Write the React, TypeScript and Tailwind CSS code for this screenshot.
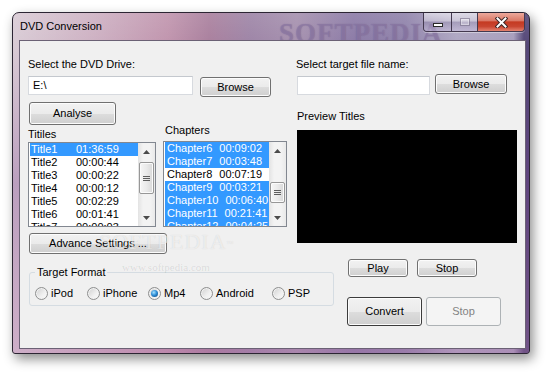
import React from "react";

const FONT = "font-['Liberation_Sans',Arial,sans-serif]";

function Btn({
  className = "",
  children,
  disabled = false,
  isDefault = false,
}: {
  className?: string;
  children: React.ReactNode;
  disabled?: boolean;
  isDefault?: boolean;
}) {
  const skin = disabled
    ? "border-[#adb2b5] bg-[#f4f4f4] text-[#838383]"
    : `${isDefault ? "border-[#3c3c3c]" : "border-[#707070]"} bg-[linear-gradient(180deg,#f2f2f2_0%,#ebebeb_50%,#dddddd_51%,#cfcfcf_100%)] text-black shadow-[inset_0_0_0_1px_#fcfcfc]`;
  return (
    <div
      className={`flex shrink-0 items-center justify-center rounded-[3px] border text-[11px] leading-[13px] ${skin} ${className}`}
    >
      {children}
    </div>
  );
}

function Arrow({ up }: { up?: boolean }) {
  return (
    <svg width="7" height="4" viewBox="0 0 7 4">
      <path d={up ? "M0 4L3.5 0L7 4Z" : "M0 0L7 0L3.5 4Z"} fill="#4b4b4b" />
    </svg>
  );
}

function ScrollBar({ thumb }: { thumb: string }) {
  return (
    <div className="flex h-full w-[17px] shrink-0 flex-col bg-[linear-gradient(90deg,#e3e3e3_0%,#f3f3f3_30%,#f3f3f3_70%,#e9e9e9_100%)]">
      <div className="flex h-[17px] shrink-0 items-center justify-center">
        <Arrow up />
      </div>
      <div className="flex-1">
        <div
          className={`mx-[1px] flex flex-col items-center justify-center gap-[1px] rounded-[2px] border border-[#979797] bg-[linear-gradient(90deg,#f6f6f6_0%,#eaeaea_50%,#d8d8d8_100%)] shadow-[inset_0_0_0_1px_#fbfbfb] ${thumb}`}
        >
          <span className="h-[1px] w-[7px] bg-[#5e5e5e]" />
          <span className="h-[1px] w-[7px] bg-[#5e5e5e]" />
          <span className="h-[1px] w-[7px] bg-[#5e5e5e]" />
        </div>
      </div>
      <div className="flex h-[17px] shrink-0 items-center justify-center">
        <Arrow />
      </div>
    </div>
  );
}

function Radio({ checked }: { checked?: boolean }) {
  return (
    <span className="flex h-[13px] w-[13px] shrink-0 items-center justify-center rounded-full border border-[#8e8f8f] bg-[linear-gradient(135deg,#cfcfcf_0%,#f0f0f0_60%,#fafafa_100%)] shadow-[inset_0_0_0_1px_#f2f2f2]">
      {checked && (
        <span className="h-[7px] w-[7px] rounded-full bg-[radial-gradient(circle_at_40%_35%,#a8e4ff_0%,#2f8fd8_45%,#0b3d70_100%)]" />
      )}
    </span>
  );
}

const titles: [string, string, boolean][] = [
  ["Title1", "01:36:59", true],
  ["Title2", "00:00:44", false],
  ["Title3", "00:00:22", false],
  ["Title4", "00:00:12", false],
  ["Title5", "00:02:29", false],
  ["Title6", "00:01:41", false],
  ["Title7", "00:00:03", false],
];

const chapters: [string, string, boolean][] = [
  ["Chapter6", "00:09:02", true],
  ["Chapter7", "00:03:48", true],
  ["Chapter8", "00:07:19", false],
  ["Chapter9", "00:03:21", true],
  ["Chapter10", "00:06:40", true],
  ["Chapter11", "00:21:41", true],
  ["Chapter12", "00:04:25", true],
];

const formats: [string, string, boolean][] = [
  ["iPod", "w-[52px]", false],
  ["iPhone", "w-[61px]", false],
  ["Mp4", "w-[52px]", true],
  ["Android", "w-[72px]", false],
  ["PSP", "w-[50px] pt-[1px]", false],
];

export default function App() {
  return (
    <div className={`relative h-[376px] w-[552px] overflow-hidden bg-white pl-[12px] pt-[12px] ${FONT}`}>
      {/* window */}
      <div className="relative flex h-[342px] w-[518px] flex-col rounded-t-[7px] rounded-b-[3px] border border-[#2c2533] bg-[linear-gradient(180deg,rgba(255,255,255,0.1)_0%,rgba(255,255,255,0)_10%,rgba(120,60,140,0.3)_50%,rgba(180,110,170,0.3)_100%),linear-gradient(90deg,#d9cbd5_0%,#cdb0c2_16%,#c094ad_30%,#a97f9d_38%,#9d84a6_46%,#a590ae_55%,#8b7aa6_66%,#8f82aa_76%,#aea6c2_86%,#a79dbc_97%,#554878_99%)] shadow-[3px_5px_12px_rgba(0,0,0,0.45)]">
        {/* title bar watermark */}
        <div className="pointer-events-none absolute left-[266px] top-[5px] font-['Liberation_Serif',serif] text-[27px] font-bold leading-[30px] tracking-[1px] text-[rgba(150,130,175,0.55)] [text-shadow:0_0_1px_rgba(60,40,90,0.35)]">
          SOFTPEDIA
        </div>

        {/* title bar */}
        <div className="flex h-[27px] shrink-0 items-start justify-between">
          <div className="mt-[7px] pl-[7px] text-[11px] leading-[13px] text-black">DVD Conversion</div>
          <div className="relative mr-[4px] flex h-[19px] overflow-hidden rounded-b-[4px] border border-t-0 border-[#43394f] shadow-[0_1px_0_rgba(255,255,255,0.4)]">
            <div className="flex w-[28px] items-end justify-center border-r border-[#43394f] bg-[linear-gradient(180deg,rgba(255,255,255,0.55)_0%,rgba(255,255,255,0.3)_45%,rgba(120,110,150,0.25)_50%,rgba(210,200,230,0.45)_100%)] pb-[4px]">
              <span className="h-[4px] w-[10px] border border-[#2a2a2a] bg-white" />
            </div>
            <div className="flex w-[26px] items-center justify-center border-r border-[#43394f] bg-[linear-gradient(180deg,rgba(255,255,255,0.55)_0%,rgba(255,255,255,0.3)_45%,rgba(120,110,150,0.25)_50%,rgba(210,200,230,0.45)_100%)]">
              <span className="h-[8px] w-[10px] border border-[rgba(90,80,110,0.5)] bg-[rgba(255,255,255,0.25)] shadow-[inset_0_0_0_1px_rgba(255,255,255,0.35)]" />
            </div>
            <div className="flex w-[46px] items-center justify-center bg-[linear-gradient(180deg,#eca99c_0%,#da7a68_42%,#c53a22_50%,#c94631_75%,#e4826f_100%)]">
              <svg width="13" height="11" viewBox="0 0 13 11">
                <path d="M2.5 1.5L10.5 9.5M10.5 1.5L2.5 9.5" stroke="#3b2626" strokeWidth="4" strokeLinecap="square" />
                <path d="M2.5 1.5L10.5 9.5M10.5 1.5L2.5 9.5" stroke="#ffffff" strokeWidth="2" strokeLinecap="square" />
              </svg>
            </div>
          </div>
        </div>

        {/* client area */}
        <div className="relative mb-[4px] ml-[6px] mr-[3px] flex flex-1 border border-[#6b6175] bg-[#f0f0f0] text-[11px] leading-[13px] text-black">
          {/* left column */}
          <div className="flex w-[276px] shrink-0 flex-col pl-[8px] pt-[17px]">
            <div>Select the DVD Drive:</div>
            <div className="mt-[5px] flex items-start">
              <div className="flex h-[19px] w-[165px] items-center border border-[#d7dadf] border-t-[#c4c8ce] bg-white pl-[4px]">E:\</div>
              <Btn className="ml-[7px] mt-[1px] h-[20px] w-[71px]">Browse</Btn>
            </div>
            <Btn className="ml-[1px] mt-[5px] h-[23px] w-[87px]">Analyse</Btn>

            <div className="-mt-[1px] flex items-end">
              <div className="flex flex-col">
                <div>Titiles</div>
                <div className="mt-[1px] flex h-[85px] w-[128px] overflow-hidden border border-[#828790] bg-white">
                  <div className="flex-1 overflow-hidden pl-[1px]">
                    {titles.map(([n, t, sel]) => (
                      <div key={n} className={`flex h-[13px] shrink-0 items-center pl-[1px] ${sel ? "bg-[#3399ff] text-white" : "text-black"}`}>
                        <span className="w-[45px]">{n}</span>
                        <span>{t}</span>
                      </div>
                    ))}
                  </div>
                  <ScrollBar thumb="mt-[2px] h-[32px]" />
                </div>
              </div>
              <div className="ml-[7px] flex flex-col">
                <div className="pl-[2px]">Chapters</div>
                <div className="mt-[4px] flex h-[86px] w-[124px] overflow-hidden border border-[#828790] bg-white">
                  <div className="flex-1 overflow-hidden pl-[1px]">
                    {chapters.map(([n, t, sel]) => (
                      <div key={n} className={`flex h-[13px] shrink-0 items-center gap-[7px] whitespace-nowrap pl-[2px] ${sel ? "bg-[#3399ff] text-white" : "text-black"}`}>
                        <span>{n}</span>
                        <span>{t}</span>
                      </div>
                    ))}
                  </div>
                  <ScrollBar thumb="mt-[23px] h-[21px]" />
                </div>
              </div>
            </div>

            <Btn className="ml-[1px] mt-[6px] h-[21px] w-[138px]">Advance Settings ...</Btn>

            <fieldset className="ml-[1px] mt-[12px] w-[305px] shrink-0 rounded-[3px] border border-[#d5dce2] pb-[5px] pl-[5px]">
              <legend className="px-[2px] text-[11px] leading-[13px]">Target Format</legend>
              <div className="mt-[7px] flex items-center">
                {formats.map(([label, w, on]) => (
                  <div key={label} className={`flex items-center gap-[3px] ${w}`}>
                    <Radio checked={on} />
                    <span>{label}</span>
                  </div>
                ))}
              </div>
            </fieldset>
          </div>

          {/* right column */}
          <div className="flex flex-1 flex-col pt-[17px]">
            <div>Select target file name:</div>
            <div className="mt-[3px] flex items-start">
              <div className="ml-[1px] mt-[2px] h-[19px] w-[133px] border border-[#d7dadf] border-t-[#c4c8ce] bg-white" />
              <Btn className="ml-[5px] h-[20px] w-[72px]">Browse</Btn>
            </div>
            <div className="ml-[1px] mt-[15px]">Preview Titles</div>
            <div className="ml-[1px] mt-[7px] h-[113px] w-[220px] bg-black" />
            <div className="mt-[16px] flex">
              <Btn className="ml-[52px] h-[18px] w-[60px]">Play</Btn>
              <Btn className="ml-[9px] h-[18px] w-[60px]">Stop</Btn>
            </div>
            <div className="mt-[20px] flex">
              <Btn isDefault className="ml-[51px] h-[29px] w-[75px]">Convert</Btn>
              <Btn disabled className="ml-[4px] h-[29px] w-[75px]">Stop</Btn>
            </div>
          </div>

          {/* watermark overlays */}
          <div className="pointer-events-none absolute left-[79px] top-[190px] font-['Liberation_Serif',serif] text-[22px] leading-[22px] tracking-[1px] text-[rgba(255,255,255,0.6)] [text-shadow:0_0_1px_rgba(0,0,0,0.15)]">
            SOFTPEDIA<sup className="text-[7px]">™</sup>
          </div>
          <div className="pointer-events-none absolute left-[102px] top-[220px] font-['Liberation_Serif',serif] text-[11px] leading-[13px] text-[rgba(0,0,0,0.1)]">
            www.softpedia.com
          </div>
        </div>
      </div>
    </div>
  );
}
